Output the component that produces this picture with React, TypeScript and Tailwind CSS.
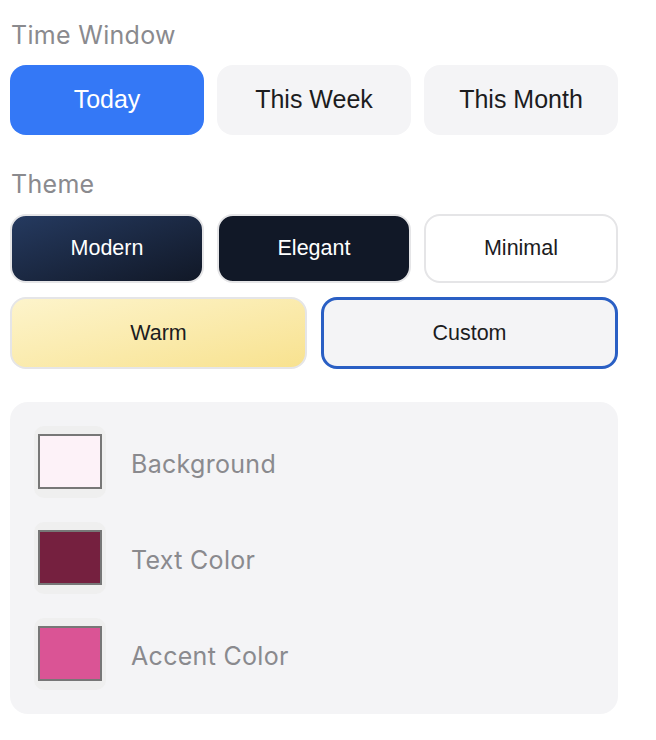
import React from "react";

const label = "font-['Inter',sans-serif] text-[25px] leading-[30px] tracking-[0.3px] text-[#8a8a8e]";
const btnFont = "font-['Liberation_Sans',Arial,sans-serif]";

function Swatch({ color, name }: { color: string; name: string }) {
  return (
    <div className="flex items-center gap-[25px]">
      <div className="flex h-[72px] w-[72px] shrink-0 items-start justify-center rounded-[10px] bg-[#efefef] pt-[8px]">
        <div className="h-[55px] w-[64px] border-2 border-[#777777]" style={{ backgroundColor: color }} />
      </div>
      <span className={`${label} pt-[3px]`}>{name}</span>
    </div>
  );
}

export default function App() {
  return (
    <div className="min-h-[740px] w-[656px] bg-white pl-[10px] pr-[38px] pt-[20px]">
      <div className={`${label} pl-[1px]`}>Time Window</div>
      <div className={`${btnFont} mt-[15px] grid grid-cols-3 gap-[13px] text-[25px]`}>
        <button className="h-[70px] rounded-[16px] bg-[#3478f6] text-white">Today</button>
        <button className="h-[70px] rounded-[16px] bg-[#f4f4f6] text-[#1c1c1e]">This Week</button>
        <button className="h-[70px] rounded-[16px] bg-[#f4f4f6] text-[#1c1c1e]">This Month</button>
      </div>

      <div className={`${label} mt-[34px] pl-[1px]`}>Theme</div>
      <div className={`${btnFont} mt-[15px] grid grid-cols-3 gap-[13px] text-[21.5px]`}>
        <button className="h-[69px] rounded-[16px] border-2 border-[#e5e5e7] bg-gradient-to-br from-[#253a60] to-[#111827] text-white">Modern</button>
        <button className="h-[69px] rounded-[16px] border-2 border-[#e5e5e7] bg-[#111827] text-white">Elegant</button>
        <button className="h-[69px] rounded-[16px] border-2 border-[#e5e5e7] bg-white text-[#1c1c1e]">Minimal</button>
      </div>
      <div className={`${btnFont} mt-[14px] grid grid-cols-2 gap-[14px] text-[21.5px]`}>
        <button className="h-[72px] rounded-[16px] border-2 border-[#e5e5e7] bg-gradient-to-br from-[#fdf4cb] to-[#f8e28f] text-[#1c1c1e]">Warm</button>
        <button className="h-[72px] rounded-[16px] border-[3px] border-[#2a5fc4] bg-[#f4f4f6] text-[#1c1c1e]">Custom</button>
      </div>

      <div className="mt-[33px] flex flex-col gap-[24px] rounded-[18px] bg-[#f4f4f6] p-[24px]">
        <Swatch color="#fdf2f8" name="Background" />
        <Swatch color="#75203f" name="Text Color" />
        <Swatch color="#da5495" name="Accent Color" />
      </div>
    </div>
  );
}
